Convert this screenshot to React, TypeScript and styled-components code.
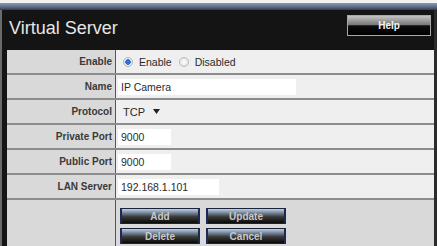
import React from "react";
import styled, { createGlobalStyle } from "styled-components";

const GlobalStyle = createGlobalStyle`
  html, body {
    margin: 0;
    padding: 0;
    background: #f4f4f4;
    font-family: "Liberation Sans", Arial, sans-serif;
  }
`;

const rows = [
  { label: "Enable", kind: "radio" },
  { label: "Name", kind: "text", value: "IP Camera", width: 178 },
  { label: "Protocol", kind: "select", value: "TCP" },
  { label: "Private Port", kind: "text", value: "9000", width: 53 },
  { label: "Public Port", kind: "text", value: "9000", width: 53 },
  { label: "LAN Server", kind: "text", value: "192.168.1.101", width: 101 },
];

function App() {
  return (
    <Page>
      <GlobalStyle />
      <TopLine />
      <BlueBar />
      <Frame>
        <Header>
          <Title>Virtual Server</Title>
          <HelpButton>Help</HelpButton>
        </Header>
        <Table>
          {rows.map((row) => (
            <Row key={row.label}>
              <Label>{row.label}</Label>
              <Value>
                {row.kind === "radio" ? (
                  <>
                    <Radio checked />
                    <RadioText>Enable</RadioText>
                    <Radio />
                    <RadioText>Disabled</RadioText>
                  </>
                ) : row.kind === "select" ? (
                  <Select>
                    {row.value}
                    <svg width="7" height="5" viewBox="0 0 7 5">
                      <path d="M0 0 L7 0 L3.5 5 Z" fill="#222" />
                    </svg>
                  </Select>
                ) : (
                  <Input style={{ width: row.width }} defaultValue={row.value} />
                )}
              </Value>
            </Row>
          ))}
          <ButtonRow>
            <Label />
            <Value>
              <Buttons>
                <ActionButton>Add</ActionButton>
                <ActionButton>Update</ActionButton>
                <ActionButton>Delete</ActionButton>
                <ActionButton>Cancel</ActionButton>
              </Buttons>
            </Value>
          </ButtonRow>
        </Table>
      </Frame>
    </Page>
  );
}

export default App;

const Page = styled.div`
  width: 437px;
  height: 246px;
  overflow: hidden;
  display: flex;
  flex-direction: column;
`;

const TopLine = styled.div`
  height: 3px;
  background: #f2f2f2;
`;

const BlueBar = styled.div`
  height: 7px;
  background: linear-gradient(to bottom, #8b9ab3, #5b6780 60%, #343b48);
`;

const Frame = styled.div`
  flex: 1;
  display: flex;
  flex-direction: column;
  background: #141414;
  border-left: 2px solid #6a6a6a;
  padding-left: 5px;
  border-right: 3px solid #2b2b2b;
`;

const Header = styled.div`
  height: 40px;
  display: flex;
  align-items: center;
  justify-content: space-between;
  padding: 0 3px 0 2px;
`;

const Title = styled.div`
  color: #e6e6e6;
  font-size: 18px;
  margin-top: -4px;
`;

const HelpButton = styled.button`
  width: 84px;
  height: 21px;
  margin-top: -9px;
  border: 1px solid #a8a8a8;
  background: linear-gradient(to bottom, #c4c4c4 0%, #7a7a7a 45%, #0c0c0c 52%, #000 100%);
  color: #f2f2f2;
  font-family: "Liberation Sans", Arial, sans-serif;
  font-weight: bold;
  font-size: 10px;
  padding: 0;
`;

const Table = styled.div`
  flex: 1;
  display: flex;
  flex-direction: column;
`;

const Row = styled.div`
  display: grid;
  grid-template-columns: 109px 1fr;
  height: 23px;
  border-bottom: 2px solid #8c8c8c;
  background: #efefef;
`;

const ButtonRow = styled(Row)`
  flex: 1;
  border-bottom: none;
  background: #d9d9d9;
`;

const Label = styled.div`
  display: flex;
  align-items: center;
  justify-content: flex-end;
  padding-right: 3px;
  background: #d9d9d9;
  border-right: 1px solid #555;
  color: #3a3a3a;
  font-weight: bold;
  font-size: 10px;
`;

const Value = styled.div`
  display: flex;
  align-items: center;
  padding-left: 2px;
  color: #2a2a2a;
  font-size: 10.5px;
`;

const Radio = styled.span<{ checked?: boolean }>`
  width: 8px;
  height: 8px;
  margin: 0 5px 0 5px;
  border-radius: 50%;
  border: 1px solid #b8b8b8;
  background: ${(p) =>
    p.checked
      ? "radial-gradient(circle, #2f6fd0 0 2.5px, #dfe8f5 3px)"
      : "radial-gradient(circle, #ffffff, #dcdcdc)"};
`;

const RadioText = styled.span`
  margin-right: 2px;
  margin-left: 1px;
`;

const Input = styled.input`
  height: 16px;
  box-sizing: border-box;
  border: none;
  background: #fff;
  padding: 0 3px;
  font-family: "Liberation Sans", Arial, sans-serif;
  font-size: 10.5px;
  color: #2a2a2a;
`;

const Select = styled.div`
  display: flex;
  align-items: center;
  gap: 8px;
  padding-left: 5px;
  font-size: 11px;
`;

const Buttons = styled.div`
  display: grid;
  grid-template-columns: 80px 80px;
  grid-auto-rows: 16px;
  column-gap: 6px;
  row-gap: 4px;
  margin-top: 8px;
  align-self: flex-start;
  padding-left: 2px;
`;

const ActionButton = styled.button`
  padding: 0;
  border: 1px solid #1c2236;
  border-left: 2px solid #1d2a52;
  border-right: 2px solid #1d2a52;
  background: linear-gradient(to bottom, #b8d0ee 0%, #7f8ea0 25%, #3a3a3a 55%, #0a0a0a 100%);
  color: #c8c8c8;
  font-family: "Liberation Sans", Arial, sans-serif;
  font-weight: bold;
  font-size: 10px;
`;
